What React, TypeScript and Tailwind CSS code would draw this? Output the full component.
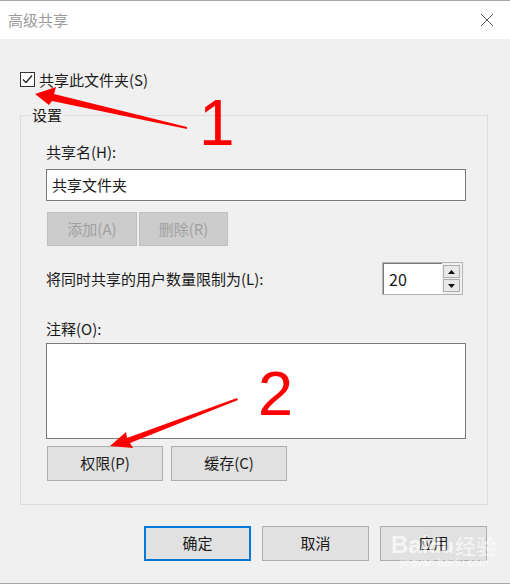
import React from 'react';

const font = { fontFamily: '"Noto Sans CJK SC", "Liberation Sans", sans-serif' };

function Btn({ label, className = '' }: { label: string; className?: string }) {
  return (
    <div
      className={`flex items-center justify-center bg-[#e1e1e1] border border-[#adadad] text-[15px] text-[#1a1a1a] ${className}`}
    >
      {label}
    </div>
  );
}

export default function App() {
  return (
    <div
      className="relative w-[510px] h-[584px] overflow-hidden bg-[#f0f0f0] border-t border-b border-[#a8a8a8] text-[#1a1a1a]"
      style={font}
    >
      {/* title bar */}
      <div className="h-[38px] bg-white flex items-center justify-between pl-[8px] pr-[15px]">
        <span className="text-[15px] text-[#9a9a9a]">高级共享</span>
        <svg width="14" height="14" viewBox="0 0 14 14" className="mr-[1px]">
          <path d="M1 1 L13 13 M13 1 L1 13" stroke="#555" strokeWidth="1" />
        </svg>
      </div>

      <div className="pl-[20px] pr-[22px]">
        {/* share checkbox */}
        <div className="mt-[33px] flex items-center h-[15px]">
          <div className="w-[15px] h-[15px] border border-[#333] bg-white flex items-center justify-center">
            <svg width="13" height="13" viewBox="0 0 13 13">
              <path d="M2 6.5 L5 9.5 L11 2.5" fill="none" stroke="#222" strokeWidth="1.3" />
            </svg>
          </div>
          <span className="ml-[4px] text-[15px] leading-[20px]">共享此文件夹(S)</span>
        </div>

        {/* settings group */}
        <div className="relative mt-[28px] h-[390px] border border-[#dcdcdc] pl-[25px] pr-[21px]">
          <span className="absolute left-[10px] top-[-11px] bg-[#f0f0f0] px-[1px] text-[15px] leading-[20px]">设置</span>

          <div className="mt-[26px] text-[15px] leading-[20px]">共享名(H):</div>
          <div className="mt-[7px] h-[32px] border border-[#7a7a7a] bg-white flex items-center pl-[5px] text-[15px]">
            共享文件夹
          </div>

          <div className="mt-[11px] flex gap-[2px] pl-[1px]">
            <div className="w-[90px] h-[34px] flex items-center justify-center bg-[#cccccc] border border-[#bfbfbf] text-[15px] text-[#a0a0a0]">
              添加(A)
            </div>
            <div className="w-[89px] h-[34px] flex items-center justify-center bg-[#cccccc] border border-[#bfbfbf] text-[15px] text-[#a0a0a0]">
              删除(R)
            </div>
          </div>

          <div className="mt-[16px] flex items-center justify-between pr-[3px]">
            <span className="text-[15px] leading-[20px]">将同时共享的用户数量限制为(L):</span>
            <div className="w-[81px] h-[33px] border border-[#b4b4b4] flex">
              <div className="flex-1 bg-white border-t border-l border-[#7a7a7a] flex items-center pl-[5px] text-[16px]">
                20
              </div>
              <div className="w-[20px] bg-[#f0f0f0] flex flex-col gap-[1px] p-[2px] pl-[1px]">
                <div className="flex-1 border border-[#adadad] bg-[#e8e8e8] flex items-center justify-center">
                  <svg width="7" height="4" viewBox="0 0 7 4">
                    <path d="M0 4 L3.5 0 L7 4 Z" fill="#111" />
                  </svg>
                </div>
                <div className="flex-1 border border-[#adadad] bg-[#e8e8e8] flex items-center justify-center">
                  <svg width="7" height="4" viewBox="0 0 7 4">
                    <path d="M0 0 L7 0 L3.5 4 Z" fill="#111" />
                  </svg>
                </div>
              </div>
            </div>
          </div>

          <div className="mt-[24px] text-[15px] leading-[20px]">注释(O):</div>
          <div className="mt-[4px] h-[96px] border border-[#7a7a7a] bg-white" />

          <div className="mt-[7px] flex gap-[8px] pl-[1px]">
            <Btn label="权限(P)" className="w-[116px] h-[35px]" />
            <Btn label="缓存(C)" className="w-[116px] h-[35px]" />
          </div>
        </div>

        {/* dialog buttons */}
        <div className="mt-[21px] flex justify-end gap-[11px] pr-[1px]">
          <div className="w-[107px] h-[35px] flex items-center justify-center bg-[#e1e1e1] border-2 border-[#0078d7] text-[15px]">
            确定
          </div>
          <Btn label="取消" className="w-[107px] h-[35px]" />
          <Btn label="应用" className="w-[107px] h-[35px]" />
        </div>
      </div>

      {/* annotation arrows */}
      <svg className="absolute left-0 top-0 pointer-events-none" width="510" height="584" viewBox="0 0 510 584">
        <path d="M35 93 L56 86 L54 93 L187 126 L187 128 L52 100 L49 104 Z" fill="#f00" />
        <path d="M110 445 L126 431 L127 437 L237 397 L238 399 L130 442 L133 447 Z" fill="#f00" />
      </svg>
      <span
        className="absolute left-[199px] top-[85px] text-[64px] leading-[74px] text-[#ff0000] pointer-events-none"
        style={{ fontFamily: '"Liberation Sans", sans-serif' }}
      >
        1
      </span>
      <span
        className="absolute left-[258px] top-[355px] text-[63px] leading-[74px] text-[#ff0000] pointer-events-none"
        style={{ fontFamily: '"Liberation Sans", sans-serif' }}
      >
        2
      </span>

      {/* watermark */}
      <div className="absolute left-[391px] top-[533px] flex flex-col items-center pointer-events-none text-white/70">
        <div className="flex items-center leading-[22px]">
          <span className="text-[24px] font-bold" style={{ fontFamily: '"Liberation Sans", sans-serif' }}>
            Bai
          </span>
          <span className="text-[20px] font-bold">du</span>
          <span className="text-[21px] ml-[1px]">经验</span>
        </div>
        <span className="text-[11px] leading-[12px]" style={{ fontFamily: '"Liberation Sans", sans-serif' }}>
          jingyan.baidu.com
        </span>
      </div>
    </div>
  );
}
